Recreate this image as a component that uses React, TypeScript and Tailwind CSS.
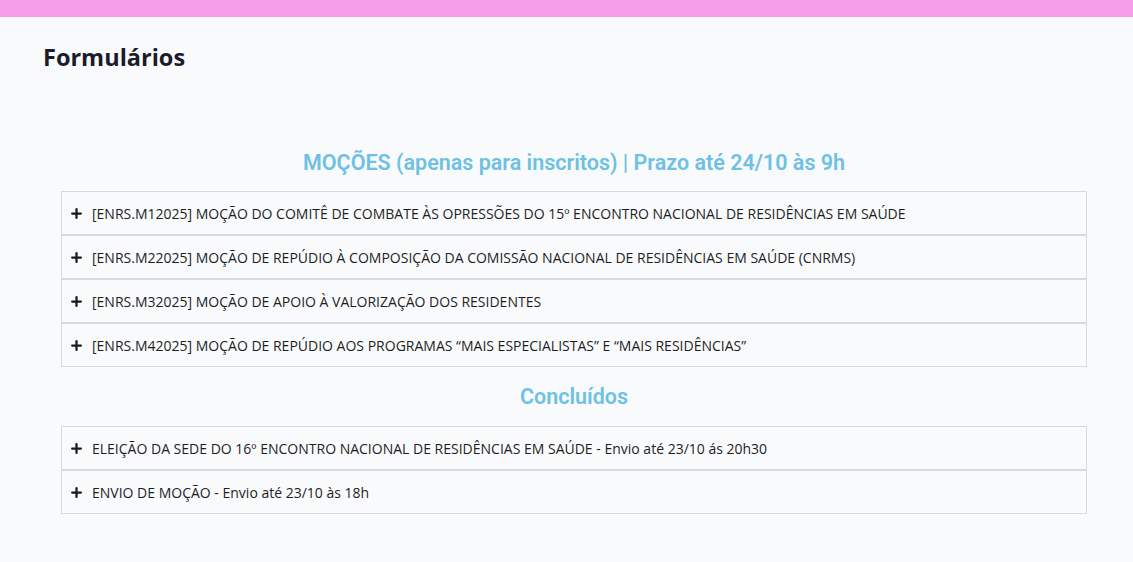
import { Plus } from "lucide-react"

const mocoes = [
  "[ENRS.M12025] MOÇÃO DO COMITÊ DE COMBATE ÀS OPRESSÕES DO 15º ENCONTRO NACIONAL DE RESIDÊNCIAS EM SAÚDE",
  "[ENRS.M22025] MOÇÃO DE REPÚDIO À COMPOSIÇÃO DA COMISSÃO NACIONAL DE RESIDÊNCIAS EM SAÚDE (CNRMS)",
  "[ENRS.M32025] MOÇÃO DE APOIO À VALORIZAÇÃO DOS RESIDENTES",
  "[ENRS.M42025] MOÇÃO DE REPÚDIO AOS PROGRAMAS “MAIS ESPECIALISTAS” E “MAIS RESIDÊNCIAS”",
]

const concluidos = [
  "ELEIÇÃO DA SEDE DO 16º ENCONTRO NACIONAL DE RESIDÊNCIAS EM SAÚDE - Envio até 23/10 ás 20h30",
  "ENVIO DE MOÇÃO - Envio até 23/10 às 18h",
]

function Item({ label }: { label: string }) {
  return (
    <button className="w-full flex items-center gap-[8px] h-[44px] pl-[7px] pr-[9px] border border-[#d8d9dd] bg-[#f9fafc] text-left">
      <Plus className="w-[15px] h-[15px] text-[#1a1a1a]" strokeWidth={3.6} />
      <span className="text-[14px] text-[#1e1e1e] font-['Open_Sans',sans-serif]">{label}</span>
    </button>
  )
}

export default function App() {
  return (
    <div className="min-h-[562px] bg-[#f9fafc] font-['Open_Sans',sans-serif]">
      <div className="h-[17px] bg-[#f49de8]" />

      <h1 className="pl-[43px] pt-[24px] text-[23.5px] font-bold text-[#1b1b2b] leading-[32px]">Formulários</h1>

      <div className="ml-[61px] w-[1026px] pt-[70px]">
        <h2 className="text-center text-[21.5px] font-semibold text-[#6ec1e4] font-['Roboto',sans-serif] leading-[40px]">
          MOÇÕES (apenas para inscritos) | Prazo até 24/10 às 9h
        </h2>
        <div className="mt-[8px] flex flex-col">
          {mocoes.map((m, i) => (
            <Item key={i} label={m} />
          ))}
        </div>

        <h2 className="mt-[10px] text-center text-[21.5px] font-semibold text-[#6ec1e4] font-['Roboto',sans-serif] leading-[40px]">
          Concluídos
        </h2>
        <div className="mt-[9px] flex flex-col">
          {concluidos.map((c, i) => (
            <Item key={i} label={c} />
          ))}
        </div>
      </div>
    </div>
  )
}
